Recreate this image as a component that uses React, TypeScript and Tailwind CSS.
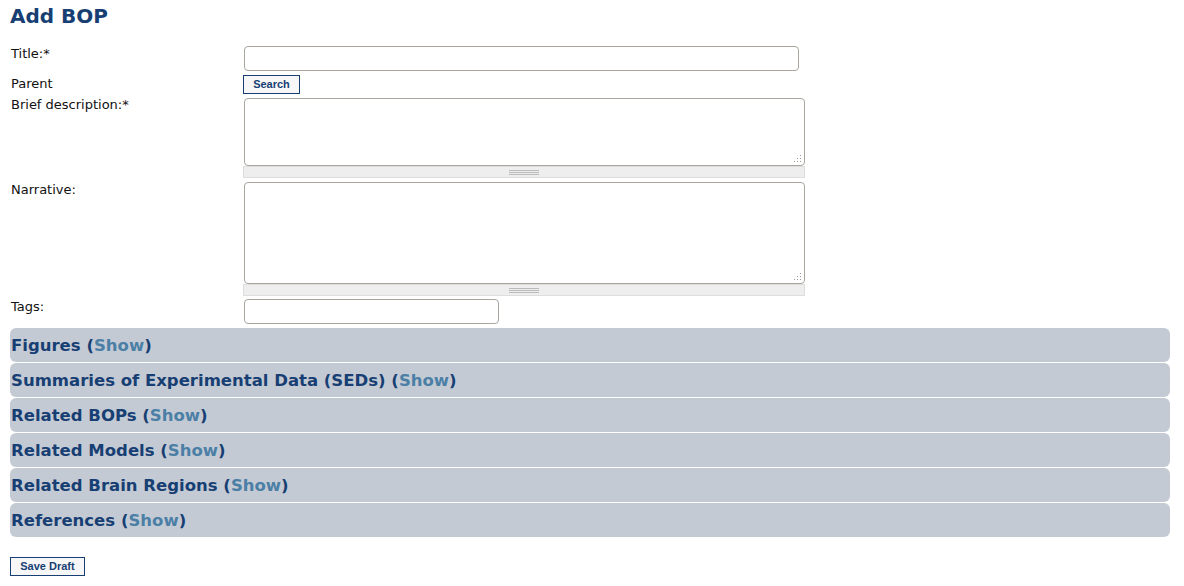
import React from 'react';

const sections = [
  'Figures',
  'Summaries of Experimental Data (SEDs)',
  'Related BOPs',
  'Related Models',
  'Related Brain Regions',
  'References',
];

function Grippie() {
  return (
    <div className="h-[12px] w-[562px] bg-[#eeeeee] border border-[#dddddd] flex items-center justify-center">
      <div className="w-[30px] flex flex-col gap-[1px]">
        <div className="h-[1px] bg-[#bbbbbb]" />
        <div className="h-[1px] bg-[#bbbbbb]" />
        <div className="h-[1px] bg-[#bbbbbb]" />
      </div>
    </div>
  );
}

function ResizeDots() {
  return (
    <svg className="absolute right-[2px] bottom-[2px]" width="9" height="9" viewBox="0 0 9 9">
      {[[7, 1], [7, 4], [4, 4], [7, 7], [4, 7], [1, 7]].map(([x, y], i) => (
        <rect key={i} x={x} y={y} width="1" height="1" fill="#999" />
      ))}
    </svg>
  );
}

export default function App() {
  return (
    <div className="min-h-screen bg-white font-['DejaVu_Sans',sans-serif] text-[13px] text-[#111]">
      <div className="px-[10px] pt-[4px]">
        <h1 className="text-[20px] leading-[24px] font-bold text-[#173f73]">Add BOP</h1>

        {/* Form */}
        <div className="mt-[18px] grid grid-cols-[234px_1fr] gap-y-[4px]">
          <label className="leading-[16px] pl-[1px]">Title:*</label>
          <input className="w-[555px] h-[25px] border border-[#aaa69f] rounded-[4px] outline-none" />

          <label className="leading-[16px] pl-[1px] pt-[1px]">Parent</label>
          <div>
            <button className="block -ml-[1px] w-[57px] h-[19px] border border-[#173f73] bg-[#f7f7f7] text-[#173f73] text-[11px] font-bold font-['Liberation_Sans',sans-serif] leading-none">
              Search
            </button>
          </div>

          <label className="leading-[16px] pl-[1px] -mt-[1px]">Brief description:*</label>
          <div className="flex flex-col">
            <div className="relative w-[561px] h-[68px] border border-[#aaa69f] rounded-[4px]">
              <ResizeDots />
            </div>
            <div className="-ml-[1px]">
              <Grippie />
            </div>
          </div>

          <label className="leading-[16px] pl-[1px]">Narrative:</label>
          <div className="flex flex-col">
            <div className="relative w-[561px] h-[102px] border border-[#aaa69f] rounded-[4px]">
              <ResizeDots />
            </div>
            <div className="-ml-[1px]">
              <Grippie />
            </div>
          </div>

          <label className="leading-[16px] pl-[1px] -mt-[1px]">Tags:</label>
          <input className="-mt-[1px] w-[255px] h-[25px] border border-[#aaa69f] rounded-[4px] outline-none" />
        </div>

        {/* Collapsible sections */}
        <div className="mt-[4px] flex flex-col gap-[1px]">
          {sections.map((s) => (
            <div
              key={s}
              className="w-[1160px] h-[34px] bg-[#c4cad4] rounded-[6px] flex items-center px-[1px] pt-[2px] text-[16.5px] font-bold text-[#173f73]"
            >
              <span>
                {s} (<span className="text-[#4b7fa6]">Show</span>)
              </span>
            </div>
          ))}
        </div>

        <div className="mt-[19px]">
          <button className="w-[75px] h-[19px] border border-[#173f73] bg-[#f7f7f7] text-[#173f73] text-[11px] font-bold font-['Liberation_Sans',sans-serif] leading-none">
            Save Draft
          </button>
        </div>
      </div>
    </div>
  );
}
